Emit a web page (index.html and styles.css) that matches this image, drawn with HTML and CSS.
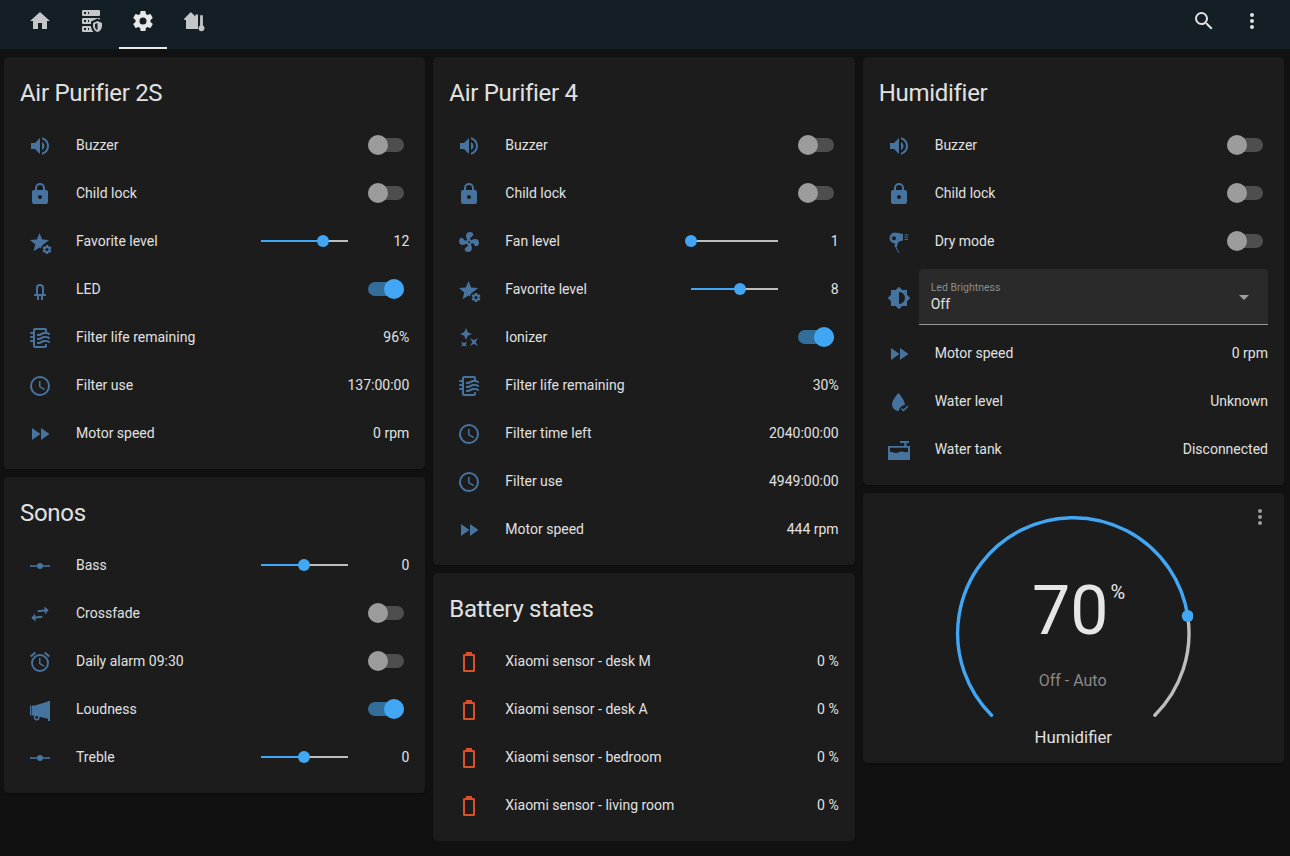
FILE: index.html
```html
<!DOCTYPE html>
<html lang="en">
<head>
    <meta charset="UTF-8">
    <title>Home Assistant</title>
    <link rel="stylesheet" href="styles.css">
</head>
<body>
    <svg class="sprite" xmlns="http://www.w3.org/2000/svg">
        <symbol id="i-home" viewBox="0 0 24 24"><path d="M10,20V14H14V20H19V12H22L12,3L2,12H5V20H10Z"/></symbol>
        <symbol id="i-server" viewBox="0 0 24 24"><path d="M3 1H19A1 1 0 0 1 20 2V6A1 1 0 0 1 19 7H3A1 1 0 0 1 2 6V2A1 1 0 0 1 3 1M3 9H19A1 1 0 0 1 20 10V10.67L17.5 9.56L11 12.44V15H3A1 1 0 0 1 2 14V10A1 1 0 0 1 3 9M3 17H11C11.06 19.25 12 21.4 13.46 23H3A1 1 0 0 1 2 22V18A1 1 0 0 1 3 17M8 5H9V3H8V5M8 13H9V11H8V13M8 21H9V19H8V21M4 3V5H6V3H4M4 11V13H6V11H4M4 19V21H6V19H4M17.5 12L22 14V17C22 19.78 20.08 22.37 17.5 23C14.92 22.37 13 19.78 13 17V14L17.5 12M17.5 13.94L15 15.06V17.72C15 19.26 16.07 20.7 17.5 21V13.94Z"/></symbol>
        <symbol id="i-cog" viewBox="0 0 24 24"><path d="M12,15.5A3.5,3.5 0 0,1 8.5,12A3.5,3.5 0 0,1 12,8.5A3.5,3.5 0 0,1 15.5,12A3.5,3.5 0 0,1 12,15.5M19.43,12.97C19.47,12.65 19.5,12.33 19.5,12C19.5,11.67 19.47,11.34 19.43,11L21.54,9.37C21.73,9.22 21.78,8.95 21.66,8.73L19.66,5.27C19.54,5.05 19.27,4.96 19.05,5.05L16.56,6.05C16.04,5.66 15.5,5.32 14.87,5.07L14.5,2.42C14.46,2.18 14.25,2 14,2H10C9.75,2 9.54,2.18 9.5,2.42L9.13,5.07C8.5,5.32 7.96,5.66 7.44,6.05L4.95,5.05C4.73,4.96 4.46,5.05 4.34,5.27L2.34,8.73C2.21,8.95 2.27,9.22 2.46,9.37L4.57,11C4.53,11.34 4.5,11.67 4.5,12C4.5,12.33 4.53,12.65 4.57,12.97L2.46,14.63C2.27,14.78 2.21,15.05 2.34,15.27L4.34,18.73C4.46,18.95 4.73,19.03 4.95,18.95L7.44,17.94C7.96,18.34 8.5,18.68 9.13,18.93L9.5,21.58C9.54,21.82 9.75,22 10,22H14C14.25,22 14.46,21.82 14.5,21.58L14.87,18.93C15.5,18.67 16.04,18.34 16.56,17.94L19.05,18.95C19.27,19.03 19.54,18.95 19.66,18.73L21.66,15.27C21.78,15.05 21.73,14.78 21.54,14.63L19.43,12.97Z"/></symbol>
        <symbol id="i-home-temp" viewBox="0 0 24 24"><path d="M7.8 3L1.2 9.8V11H3V20H15V5.5H12.5V7.6Z"/><path d="M18.5 6A1.4 1.4 0 0 1 19.9 7.4V16.6A3 3 0 1 1 17.1 16.6V7.4A1.4 1.4 0 0 1 18.5 6Z"/></symbol>
        <symbol id="i-search" viewBox="0 0 24 24"><path d="M9.5,3A6.5,6.5 0 0,1 16,9.5C16,11.11 15.41,12.59 14.44,13.73L14.71,14H15.5L20.5,19L19,20.5L14,15.5V14.71L13.73,14.44C12.59,15.41 11.11,16 9.5,16A6.5,6.5 0 0,1 3,9.5A6.5,6.5 0 0,1 9.5,3M9.5,5C7,5 5,7 5,9.5C5,12 7,14 9.5,14C12,14 14,12 14,9.5C14,7 12,5 9.5,5Z"/></symbol>
        <symbol id="i-dots" viewBox="0 0 24 24"><path d="M12,16A2,2 0 0,1 14,18A2,2 0 0,1 12,20A2,2 0 0,1 10,18A2,2 0 0,1 12,16M12,10A2,2 0 0,1 14,12A2,2 0 0,1 12,14A2,2 0 0,1 10,12A2,2 0 0,1 12,10M12,4A2,2 0 0,1 14,6A2,2 0 0,1 12,8A2,2 0 0,1 10,6A2,2 0 0,1 12,4Z"/></symbol>
        <symbol id="i-volume" viewBox="0 0 24 24"><path d="M14,3.23V5.29C16.89,6.15 19,8.83 19,12C19,15.17 16.89,17.84 14,18.7V20.77C18,19.86 21,16.28 21,12C21,7.72 18,4.14 14,3.23M16.5,12C16.5,10.23 15.5,8.71 14,7.97V16C15.5,15.29 16.5,13.76 16.5,12M3,9V15H7L12,20V4L7,9H3Z"/></symbol>
        <symbol id="i-lock" viewBox="0 0 24 24"><path d="M12,17A2,2 0 0,0 14,15C14,13.89 13.1,13 12,13A2,2 0 0,0 10,15A2,2 0 0,0 12,17M18,8A2,2 0 0,1 20,10V20A2,2 0 0,1 18,22H6A2,2 0 0,1 4,20V10C4,8.89 4.9,8 6,8H7V6A5,5 0 0,1 12,1A5,5 0 0,1 17,6V8H18M12,3A3,3 0 0,0 9,6V8H15V6A3,3 0 0,0 12,3Z"/></symbol>
        <symbol id="i-star-cog" viewBox="0 0 24 24">
            <path d="M11.5,17.6L17.4,21.2L15.8,14.5L21,10L14.2,9.4L11.5,3L8.8,9.4L2,10L7.2,14.5L5.6,21.2Z"/>
            <circle cx="19" cy="19.5" r="6.2" fill="#1c1c1c"/>
            <path transform="translate(19 19.5) scale(.46) translate(-12 -12)" d="M12,15.5A3.5,3.5 0 0,1 8.5,12A3.5,3.5 0 0,1 12,8.5A3.5,3.5 0 0,1 15.5,12A3.5,3.5 0 0,1 12,15.5M19.43,12.97C19.47,12.65 19.5,12.33 19.5,12C19.5,11.67 19.47,11.34 19.43,11L21.54,9.37C21.73,9.22 21.78,8.95 21.66,8.73L19.66,5.27C19.54,5.05 19.27,4.96 19.05,5.05L16.56,6.05C16.04,5.66 15.5,5.32 14.87,5.07L14.5,2.42C14.46,2.18 14.25,2 14,2H10C9.75,2 9.54,2.18 9.5,2.42L9.13,5.07C8.5,5.32 7.96,5.66 7.44,6.05L4.95,5.05C4.73,4.96 4.46,5.05 4.34,5.27L2.34,8.73C2.21,8.95 2.27,9.22 2.46,9.37L4.57,11C4.53,11.34 4.5,11.67 4.5,12C4.5,12.33 4.53,12.65 4.57,12.97L2.46,14.63C2.27,14.78 2.21,15.05 2.34,15.27L4.34,18.73C4.46,18.95 4.73,19.03 4.95,18.95L7.44,17.94C7.96,18.34 8.5,18.68 9.13,18.93L9.5,21.58C9.54,21.82 9.75,22 10,22H14C14.25,22 14.46,21.82 14.5,21.58L14.87,18.93C15.5,18.67 16.04,18.34 16.56,17.94L19.05,18.95C19.27,19.03 19.54,18.95 19.66,18.73L21.66,15.27C21.78,15.05 21.73,14.78 21.54,14.63L19.43,12.97Z"/>
        </symbol>
        <symbol id="i-led" viewBox="0 0 24 24"><path d="M12,6A4,4 0 0,1 16,10V16H18V18H15V22H13V18H11V22H9V18H6V16H8V10A4,4 0 0,1 12,6M12,8A2,2 0 0,0 10,10V16H14V10A2,2 0 0,0 12,8Z"/></symbol>
        <symbol id="i-filter" viewBox="0 0 24 24"><path d="M19,18.31V20A2,2 0 0,1 17,22H7A2,2 0 0,1 5,20V16.3C4.54,16.12 3.95,16 3,16A1,1 0 0,1 2,15A1,1 0 0,1 3,14C3.82,14 4.47,14.08 5,14.21V12.3C4.54,12.12 3.95,12 3,12A1,1 0 0,1 2,11A1,1 0 0,1 3,10C3.82,10 4.47,10.08 5,10.21V8.3C4.54,8.12 3.95,8 3,8A1,1 0 0,1 2,7A1,1 0 0,1 3,6C3.82,6 4.47,6.08 5,6.21V4A2,2 0 0,1 7,2H17A2,2 0 0,1 19,4V6.16C20.78,6.47 21.54,7.13 21.71,7.29C22.1,7.68 22.1,8.32 21.71,8.71C21.32,9.1 20.8,9.09 20.29,8.71V8.71C20.29,8.71 19.25,8 17,8C15.74,8 14.91,8.41 13.95,8.9C12.91,9.41 11.74,10 10,10C9.64,10 9.31,10 9,9.96V7.95C9.3,8 9.63,8 10,8C11.26,8 12.09,7.59 13.05,7.11C14.09,6.59 15.26,6 17,6V4H7V20H17V18C18.5,18 18.97,18.29 19,18.31M17,10C15.26,10 14.09,10.59 13.05,11.11C12.09,11.59 11.26,12 10,12C9.63,12 9.3,12 9,11.95V13.96C9.31,14 9.64,14 10,14C11.74,14 12.91,13.41 13.95,12.89C14.91,12.41 15.74,12 17,12C19.25,12 20.29,12.71 20.29,12.71V12.71C20.8,13.09 21.32,13.1 21.71,12.71C22.1,12.32 22.1,11.68 21.71,11.29C21.54,11.13 20.54,10 17,10M17,14C15.26,14 14.09,14.59 13.05,15.11C12.09,15.59 11.26,16 10,16C9.63,16 9.3,16 9,15.95V17.96C9.31,18 9.64,18 10,18C11.74,18 12.91,17.41 13.95,16.89C14.91,16.41 15.74,16 17,16C19.25,16 20.29,16.71 20.29,16.71V16.71C20.8,17.09 21.32,17.1 21.71,16.71C22.1,16.32 22.1,15.68 21.71,15.29C21.54,15.13 20.54,14 17,14Z"/></symbol>
        <symbol id="i-clock" viewBox="0 0 24 24"><path d="M12,20A8,8 0 0,0 20,12A8,8 0 0,0 12,4A8,8 0 0,0 4,12A8,8 0 0,0 12,20M12,2A10,10 0 0,1 22,12A10,10 0 0,1 12,22C6.47,22 2,17.5 2,12A10,10 0 0,1 12,2M12.5,7V12.25L17,14.92L16.25,16.15L11,13V7H12.5Z"/></symbol>
        <symbol id="i-ff" viewBox="0 0 24 24"><path d="M13,6V18L21.5,12M4,18L12.5,12L4,6V18Z"/></symbol>
        <symbol id="i-fan" viewBox="0 0 24 24"><path d="M12,11A1,1 0 0,0 11,12A1,1 0 0,0 12,13A1,1 0 0,0 13,12A1,1 0 0,0 12,11M12.5,2C17,2 17.11,5.57 14.75,6.75C13.76,7.24 13.32,8.29 13.13,9.22C13.61,9.42 14.03,9.73 14.35,10.13C18.05,8.13 22.03,8.92 22.03,12.5C22.03,17 18.46,17.1 17.28,14.73C16.78,13.74 15.72,13.3 14.79,13.11C14.59,13.59 14.28,14 13.88,14.34C15.87,18.03 15.08,22 11.5,22C7,22 6.91,18.42 9.27,17.24C10.25,16.75 10.69,15.71 10.89,14.79C10.4,14.59 9.97,14.27 9.65,13.87C5.96,15.85 2,15.07 2,11.5C2,7 5.56,6.89 6.74,9.26C7.24,10.25 8.29,10.68 9.22,10.87C9.41,10.39 9.73,9.97 10.14,9.65C8.15,5.96 8.94,2 12.5,2Z"/></symbol>
        <symbol id="i-ionizer" viewBox="0 0 24 24"><path d="M9 2L10.8 6.2L15 8L10.8 9.8L9 14L7.2 9.8L3 8L7.2 6.2Z"/><path d="M13 12L17 14.3L21 12L18.7 16L21 20L17 17.7L13 20L15.3 16Z"/><path d="M4 15.7L7 17L10 15.7L8.7 18.2L10 20.7L7 19.4L4 20.7L5.3 18.2Z"/></symbol>
        <symbol id="i-eq" viewBox="0 0 24 24"><path d="M2 11.2H22V12.8H2Z"/><circle cx="12" cy="12" r="3"/></symbol>
        <symbol id="i-swap" viewBox="0 0 24 24"><path d="M21,9L17,5V8H10V10H17V13M7,11L3,15L7,19V16H14V14H7V11Z" transform="rotate(-6 12 12)"/></symbol>
        <symbol id="i-alarm" viewBox="0 0 24 24"><path d="M12,20A7,7 0 0,1 5,13A7,7 0 0,1 12,6A7,7 0 0,1 19,13A7,7 0 0,1 12,20M12,4A9,9 0 0,0 3,13A9,9 0 0,0 12,22A9,9 0 0,0 21,13A9,9 0 0,0 12,4M12.5,8H11V14L15.75,16.85L16.5,15.62L12.5,13.25V8M7.88,3.39L6.6,1.86L2,5.71L3.29,7.24L7.88,3.39M22,5.72L17.4,1.86L16.11,3.39L20.71,7.25L22,5.72Z"/></symbol>
        <symbol id="i-horn" viewBox="0 0 24 24"><path d="M2 7.5H3.4V17.5H2ZM4 7.5H7L20 3.5V3H22V23H20V20.8L7 17.5H4Z"/><circle cx="8.7" cy="19.5" r="2.2" fill="none" stroke="currentColor" stroke-width="1.5"/></symbol>
        <symbol id="i-dryer" viewBox="0 0 24 24">
            <path fill-rule="evenodd" d="M7 2.5C10 2.5 13 3.5 16 4V10.5C14 10.8 12.5 11.4 11 12.5L9.8 17H7.6L8 13.6A5.6 5.6 0 0 1 7 2.5ZM7 6.2A2 2 0 1 0 7 10.2A2 2 0 1 0 7 6.2Z"/>
            <path d="M8.8 17L12 23" fill="none" stroke="currentColor" stroke-width="1"/>
            <path d="M17.5 5H21M17.5 7.2H21M17.5 9.4H21" fill="none" stroke="currentColor" stroke-width="1"/>
        </symbol>
        <symbol id="i-bright" viewBox="0 0 24 24"><path d="M12,18V6A6,6 0 0,1 18,12A6,6 0 0,1 12,18M20,15.31L23.31,12L20,8.69V4H15.31L12,0.69L8.69,4H4V8.69L0.69,12L4,15.31V20H8.69L12,23.31L15.31,20H20V15.31Z"/></symbol>
        <symbol id="i-water" viewBox="0 0 24 24">
            <path d="M11.5 3C11.5 3 5 9.5 5 14.5A6.5 6.5 0 0 0 12 21C12 18.5 13.5 16 18 14.7C17.5 9.5 11.5 3 11.5 3Z"/>
            <path d="M14.5 18.5L16.5 20.5L21 16" fill="none" stroke="currentColor" stroke-width="1.5"/>
        </symbol>
        <symbol id="i-tank" viewBox="0 0 24 24"><path fill-rule="evenodd" d="M13 3H22V5H19.5V8H23V22H1V8H17.3V5H13ZM3 9.8V14C5 13 6.5 15 9 15S12 13.5 15 13.5S19 15 21 14V9.8Z"/></symbol>
        <symbol id="i-battery" viewBox="0 0 24 24"><path d="M16,20H8V6H16M16.67,4H15V2H9V4H7.33A1.33,1.33 0 0,0 6,5.33V20.67C6,21.4 6.6,22 7.33,22H16.67A1.33,1.33 0 0,0 18,20.67V5.33C18,4.6 17.4,4 16.67,4Z"/></symbol>
        <symbol id="i-down" viewBox="0 0 24 24"><path d="M7,10L12,15L17,10H7Z"/></symbol>
    </svg>

    <header class="topbar">
        <nav class="tabs">
            <a class="tab"><svg class="icon"><use href="#i-home"/></svg></a>
            <a class="tab"><svg class="icon"><use href="#i-server"/></svg></a>
            <a class="tab active"><svg class="icon"><use href="#i-cog"/></svg></a>
            <a class="tab"><svg class="icon"><use href="#i-home-temp"/></svg></a>
        </nav>
        <div class="actions">
            <a class="action"><svg class="icon"><use href="#i-search"/></svg></a>
            <a class="action"><svg class="icon"><use href="#i-dots"/></svg></a>
        </div>
    </header>

    <main class="columns">
        <div class="column">
            <section class="card">
                <h2>Air Purifier 2S</h2>
                <div class="row"><svg class="icon state"><use href="#i-volume"/></svg><span class="name">Buzzer</span><span class="toggle"></span></div>
                <div class="row"><svg class="icon state"><use href="#i-lock"/></svg><span class="name">Child lock</span><span class="toggle"></span></div>
                <div class="row"><svg class="icon state"><use href="#i-star-cog"/></svg><span class="name">Favorite level</span><span class="slider"><span class="fill" style="width: 71%"></span></span><span class="num">12</span></div>
                <div class="row"><svg class="icon state"><use href="#i-led"/></svg><span class="name">LED</span><span class="toggle on"></span></div>
                <div class="row"><svg class="icon state"><use href="#i-filter"/></svg><span class="name">Filter life remaining</span><span class="value">96%</span></div>
                <div class="row"><svg class="icon state"><use href="#i-clock"/></svg><span class="name">Filter use</span><span class="value">137:00:00</span></div>
                <div class="row"><svg class="icon state"><use href="#i-ff"/></svg><span class="name">Motor speed</span><span class="value">0 rpm</span></div>
            </section>
            <section class="card">
                <h2>Sonos</h2>
                <div class="row"><svg class="icon state"><use href="#i-eq"/></svg><span class="name">Bass</span><span class="slider"><span class="fill" style="width: 49.5%"></span></span><span class="num">0</span></div>
                <div class="row"><svg class="icon state"><use href="#i-swap"/></svg><span class="name">Crossfade</span><span class="toggle"></span></div>
                <div class="row"><svg class="icon state"><use href="#i-alarm"/></svg><span class="name">Daily alarm 09:30</span><span class="toggle"></span></div>
                <div class="row"><svg class="icon state"><use href="#i-horn"/></svg><span class="name">Loudness</span><span class="toggle on"></span></div>
                <div class="row"><svg class="icon state"><use href="#i-eq"/></svg><span class="name">Treble</span><span class="slider"><span class="fill" style="width: 49.5%"></span></span><span class="num">0</span></div>
            </section>
        </div>

        <div class="column">
            <section class="card">
                <h2>Air Purifier 4</h2>
                <div class="row"><svg class="icon state"><use href="#i-volume"/></svg><span class="name">Buzzer</span><span class="toggle"></span></div>
                <div class="row"><svg class="icon state"><use href="#i-lock"/></svg><span class="name">Child lock</span><span class="toggle"></span></div>
                <div class="row"><svg class="icon state"><use href="#i-fan"/></svg><span class="name">Fan level</span><span class="slider"><span class="fill" style="width: 0%"></span></span><span class="num">1</span></div>
                <div class="row"><svg class="icon state"><use href="#i-star-cog"/></svg><span class="name">Favorite level</span><span class="slider"><span class="fill" style="width: 57%"></span></span><span class="num">8</span></div>
                <div class="row"><svg class="icon state"><use href="#i-ionizer"/></svg><span class="name">Ionizer</span><span class="toggle on"></span></div>
                <div class="row"><svg class="icon state"><use href="#i-filter"/></svg><span class="name">Filter life remaining</span><span class="value">30%</span></div>
                <div class="row"><svg class="icon state"><use href="#i-clock"/></svg><span class="name">Filter time left</span><span class="value">2040:00:00</span></div>
                <div class="row"><svg class="icon state"><use href="#i-clock"/></svg><span class="name">Filter use</span><span class="value">4949:00:00</span></div>
                <div class="row"><svg class="icon state"><use href="#i-ff"/></svg><span class="name">Motor speed</span><span class="value">444 rpm</span></div>
            </section>
            <section class="card">
                <h2>Battery states</h2>
                <div class="row"><svg class="icon low"><use href="#i-battery"/></svg><span class="name">Xiaomi sensor - desk M</span><span class="value">0 %</span></div>
                <div class="row"><svg class="icon low"><use href="#i-battery"/></svg><span class="name">Xiaomi sensor - desk A</span><span class="value">0 %</span></div>
                <div class="row"><svg class="icon low"><use href="#i-battery"/></svg><span class="name">Xiaomi sensor - bedroom</span><span class="value">0 %</span></div>
                <div class="row"><svg class="icon low"><use href="#i-battery"/></svg><span class="name">Xiaomi sensor - living room</span><span class="value">0 %</span></div>
            </section>
        </div>

        <div class="column">
            <section class="card">
                <h2>Humidifier</h2>
                <div class="row"><svg class="icon state"><use href="#i-volume"/></svg><span class="name">Buzzer</span><span class="toggle"></span></div>
                <div class="row"><svg class="icon state"><use href="#i-lock"/></svg><span class="name">Child lock</span><span class="toggle"></span></div>
                <div class="row"><svg class="icon state"><use href="#i-dryer"/></svg><span class="name">Dry mode</span><span class="toggle"></span></div>
                <div class="row select-row">
                    <svg class="icon state"><use href="#i-bright"/></svg>
                    <div class="select">
                        <div class="select-text">
                            <span class="select-label">Led Brightness</span>
                            <span class="select-value">Off</span>
                        </div>
                        <svg class="icon arrow"><use href="#i-down"/></svg>
                    </div>
                </div>
                <div class="row"><svg class="icon state"><use href="#i-ff"/></svg><span class="name">Motor speed</span><span class="value">0 rpm</span></div>
                <div class="row"><svg class="icon state"><use href="#i-water"/></svg><span class="name">Water level</span><span class="value">Unknown</span></div>
                <div class="row"><svg class="icon state"><use href="#i-tank"/></svg><span class="name">Water tank</span><span class="value">Disconnected</span></div>
            </section>
            <section class="card thermostat">
                <svg class="icon more"><use href="#i-dots"/></svg>
                <div class="dial">
                    <svg class="dial-arc" width="240" height="210" viewBox="0 0 240 210">
                        <path class="arc-rest" d="M234.7 105A115.7 115.7 0 0 1 201.9 204.2"/>
                        <path class="arc-fill" d="M38.5 204.2A115.7 115.7 0 1 1 234.7 105"/>
                        <circle class="arc-handle" cx="234.7" cy="105" r="6"/>
                    </svg>
                    <div class="dial-value">70<span class="dial-unit">%</span></div>
                    <div class="dial-mode">Off - Auto</div>
                </div>
                <div class="dial-name">Humidifier</div>
            </section>
        </div>
    </main>
</body>
</html>
```

FILE: styles.css
```css
body {
    margin: 0;
    background: #111111;
    color: #e1e1e1;
    font-family: Roboto, "Noto Sans", sans-serif;
    font-size: 14px;
}

.sprite {
    display: none;
}

.icon {
    width: 24px;
    height: 24px;
    fill: currentColor;
    flex: none;
}

.topbar {
    height: 49px;
    background: #141e25;
    display: flex;
    justify-content: space-between;
    padding: 0 16px;
    box-sizing: border-box;
}

.tabs {
    display: flex;
    gap: 3.67px;
}

.tab {
    width: 48px;
    height: 49px;
    box-sizing: border-box;
    padding-top: 9px;
    display: flex;
    justify-content: center;
    color: #c4c6c8;
}

.tab.active {
    color: #e8e8e8;
    border-bottom: 2px solid #e8e8e8;
}

.actions {
    display: flex;
    gap: 24px;
    padding: 9px 10px 0 0;
    color: #e1e1e1;
}

.columns {
    display: grid;
    grid-template-columns: repeat(3, 1fr);
    gap: 8px;
    padding: 8px 6px 0 4px;
    align-items: start;
}

.column {
    display: flex;
    flex-direction: column;
    gap: 8px;
}

.card {
    position: relative;
    background: #1c1c1c;
    border-radius: 4px;
    padding: 0 16px 12px;
    box-shadow: 0 1px 2px rgba(0,0,0,0.4);
}

.card h2 {
    margin: 0;
    height: 64px;
    line-height: 72px;
    font-size: 24px;
    font-weight: 400;
    letter-spacing: -0.288px;
    color: #e1e1e1;
}

.row {
    display: flex;
    align-items: center;
    height: 48px;
}

.row > .state, .row > .low {
    width: 24px;
    margin: 2px 8px 0;
}

.state {
    color: #47739f;
}

.low {
    color: #db4f2c;
}

.name {
    flex: 1;
    margin-left: 16px;
}

.value {
    text-align: right;
}

.num {
    width: 45px;
    text-align: right;
    margin-left: 16px;
}

.toggle {
    position: relative;
    width: 36px;
    height: 14px;
    margin-right: 5px;
    border-radius: 7px;
    background: #4e4e4e;
}

.toggle::after {
    content: "";
    position: absolute;
    left: 0;
    top: -3px;
    width: 20px;
    height: 20px;
    border-radius: 50%;
    background: #9c9c9c;
}

.toggle.on {
    background: #336e9b;
}

.toggle.on::after {
    left: 16px;
    background: #41a7f4;
}

.slider {
    width: 87px;
    height: 2px;
    background: #bdbdbd;
}

.fill {
    display: block;
    position: relative;
    height: 2px;
    background: #41a7f4;
}

.fill::after {
    content: "";
    position: absolute;
    right: -6px;
    top: -5px;
    width: 12px;
    height: 12px;
    border-radius: 50%;
    background: #41a7f4;
}

.select-row {
    height: 64px;
}

.select {
    flex: 1;
    height: 56px;
    box-sizing: border-box;
    padding: 0 12px;
    display: flex;
    align-items: center;
    justify-content: space-between;
    background: #2a2a2a;
    border-radius: 4px 4px 0 0;
    border-bottom: 1px solid #9a9a9a;
}

.select-text {
    display: flex;
    flex-direction: column;
}

.select-label {
    font-size: 10.5px;
    line-height: 14px;
    color: #8c8c8c;
}

.select-value {
    line-height: 18px;
}

.arrow {
    color: #9e9e9e;
}

.thermostat {
    display: flex;
    flex-direction: column;
    align-items: center;
    height: 270px;
    box-sizing: border-box;
    padding: 18px 0 0;
}

.more {
    position: absolute;
    top: 12px;
    right: 12px;
    color: #9e9e9e;
}

.dial {
    position: relative;
    width: 240px;
    height: 210px;
    margin-right: 1.5px;
}

.dial-arc {
    display: block;
}

.arc-fill, .arc-rest {
    fill: none;
    stroke-width: 3.4;
    stroke-linecap: round;
}

.arc-fill {
    stroke: #41a7f4;
}

.arc-rest {
    stroke: #bdbdbd;
}

.arc-handle {
    fill: #41a7f4;
}

.dial-value {
    position: absolute;
    left: 79.5px;
    top: 60px;
    font-size: 68px;
    line-height: 80px;
    color: #e6e6e6;
}

.dial-unit {
    position: absolute;
    left: 100%;
    top: 9px;
    margin-left: 2px;
    font-size: 20px;
    line-height: 24px;
}

.dial-mode {
    position: absolute;
    left: 0;
    right: 0;
    top: 160px;
    text-align: center;
    font-size: 16px;
    line-height: 20px;
    color: #8a8a8a;
}

.dial-name {
    margin-top: 6px;
    font-size: 16.8px;
    line-height: 20px;
    color: #e1e1e1;
}
```
